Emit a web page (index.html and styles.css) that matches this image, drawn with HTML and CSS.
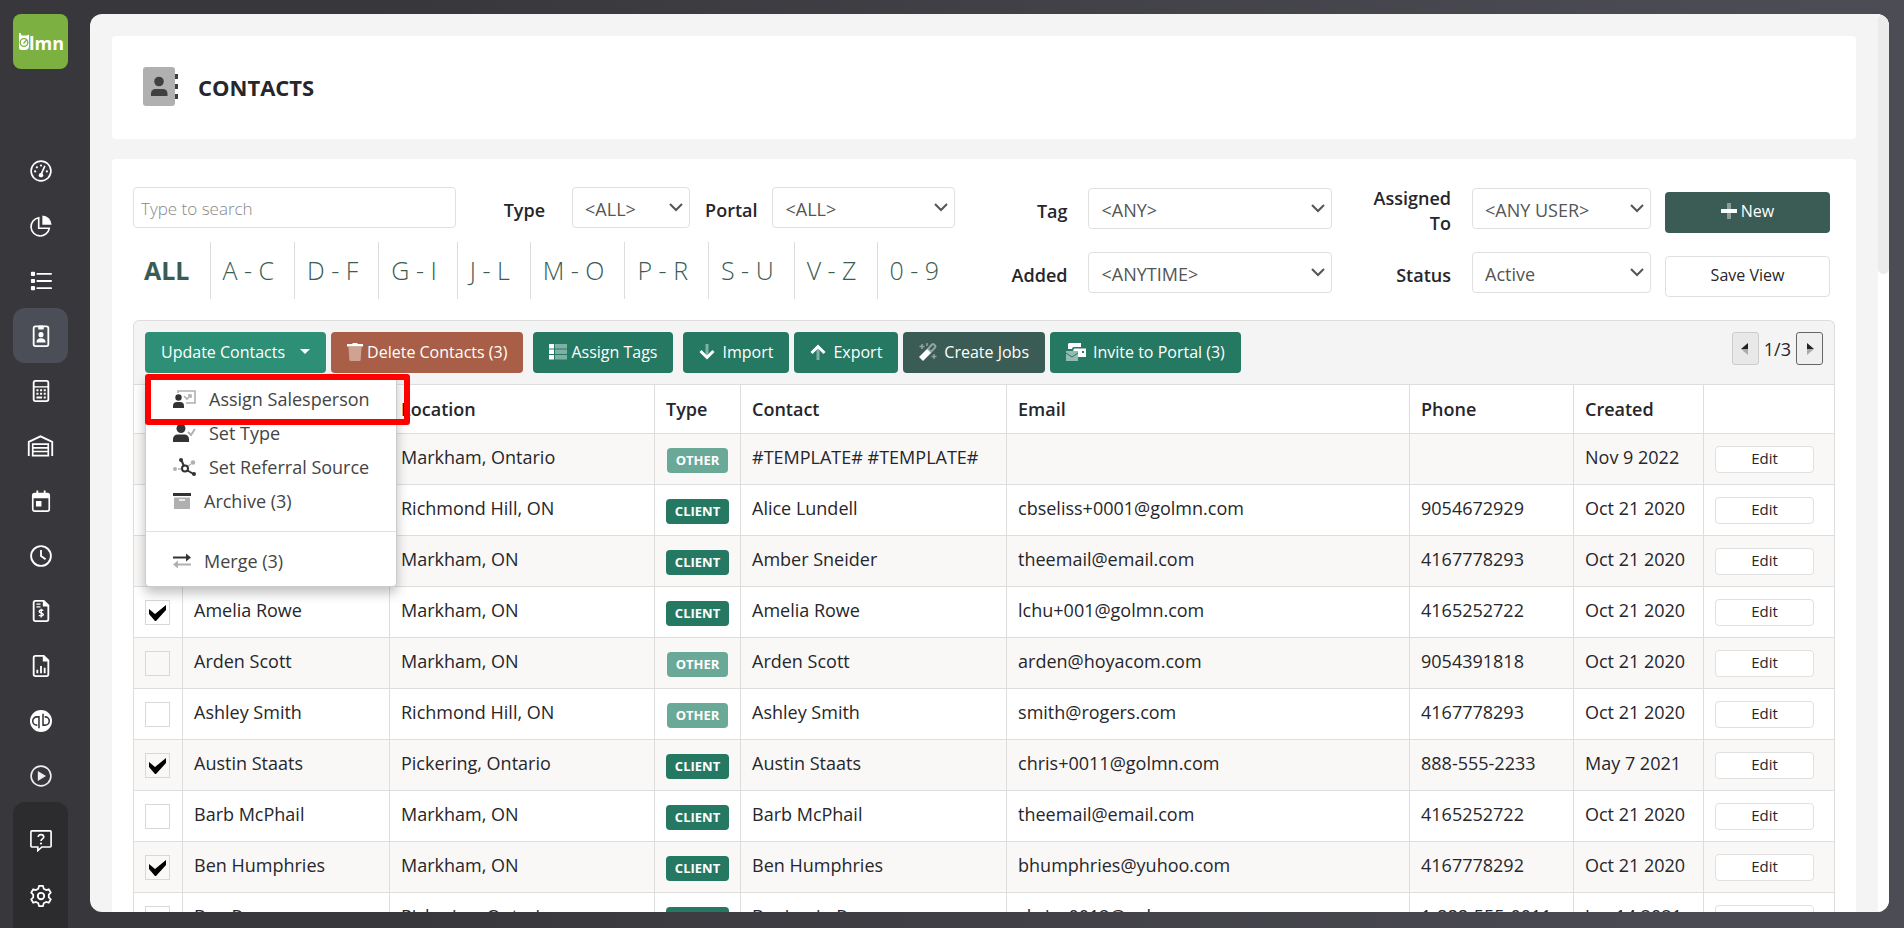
FILE: index.html
```html
<!DOCTYPE html>
<html lang="en">
<head>
    <meta charset="UTF-8">
    <meta name="viewport" content="width=device-width, initial-scale=1.0">
    <title>LMN - Contacts</title>
    <link rel="stylesheet" href="styles.css">
</head>
<body>

    <aside class="sidebar">
        <a class="logo" href="#" aria-label="LMN home">
            <svg width="55" height="55" viewBox="0 0 55 55">
                <path fill="#fff" d="M6 19h1.500l1 2.500H14l2-1V32a4 4 0 0 1-4 4H8.500A2.500 2.500 0 0 1 6 33.500z"/>
                <circle cx="11" cy="28.500" r="3.800" fill="none" stroke="#7cb041" stroke-width="1.300"/>
                <path d="M10.500 29.500l3.500-4" stroke="#7cb041" stroke-width="1.300"/>
                <text class="logo-text" x="16" y="36">lmn</text>
            </svg>
        </a>

        <nav class="side-nav" aria-label="Main">
            <a href="#" aria-label="Dashboard">
                <svg class="side-icon" viewBox="0 0 24 24"><circle cx="12" cy="12" r="10.800" fill="none" stroke="#fff" stroke-width="1.800"/><circle cx="5.600" cy="12.500" r="1.200"/><circle cx="7.500" cy="8" r="1.200"/><circle cx="12" cy="6" r="1.200"/><circle cx="18.400" cy="12.500" r="1.200"/><circle cx="12" cy="16.500" r="2.400"/><path d="M12 16l4-9" stroke="#fff" stroke-width="1.800" stroke-linecap="round"/></svg>
            </a>
            <a href="#" aria-label="Budgets">
                <svg class="side-icon" viewBox="0 0 24 24"><path d="M13.500 0.500A10.500 10.500 0 0 1 23.500 10.500h-10z"/><path d="M9.500 3A10 10 0 1 0 21 14.500H9.500z" fill="none" stroke="#fff" stroke-width="1.800"/></svg>
            </a>
            <a href="#" aria-label="Lists">
                <svg class="side-icon" viewBox="0 0 24 24"><rect x="1" y="2" width="4.500" height="4.500" rx="1"/><rect x="1" y="9.700" width="4.500" height="4.500" rx="1"/><rect x="1" y="17.500" width="4.500" height="4.500" rx="1"/><path d="M8 4.200h15M8 12h15M8 19.800h15" stroke="#fff" stroke-width="2" stroke-linecap="round"/></svg>
            </a>
            <a class="active" href="#" aria-label="Contacts">
                <svg class="side-icon" viewBox="0 0 24 24"><rect x="4" y="1.500" width="16" height="21.500" rx="2" fill="none" stroke="#fff" stroke-width="2"/><rect x="9" y="0.500" width="6" height="4.500" rx="1"/><circle cx="12" cy="10.500" r="2.800"/><path d="M7 19c0-3 2-4.500 5-4.500s5 1.500 5 4.500z"/></svg>
            </a>
            <a href="#" aria-label="Estimates">
                <svg class="side-icon" viewBox="0 0 24 24"><rect x="4" y="1" width="16" height="22" rx="2" fill="none" stroke="#fff" stroke-width="2"/><path d="M4 7.500h16" stroke="#fff" stroke-width="1.500"/><path d="M7 10h2.200v2.200H7zM11 10h2.200v2.200H11zM15 10h2.200v2.200H15zM7 14h2.200v2.200H7zM11 14h2.200v2.200H11zM15 14h2.200v2.200H15zM7 18h6.200v2.200H7zM15 18h2.200v2.200H15z"/></svg>
            </a>
            <a href="#" aria-label="Warehouse">
                <svg class="side-icon wide" viewBox="0 0 28 24"><path d="M1.200 23V7.500L14 1.500l12.800 6V23" fill="none" stroke="#fff" stroke-width="2"/><path d="M5.500 23V10h17v13M5.500 14h17M5.500 18h17M4.500 22.500h19" fill="none" stroke="#fff" stroke-width="1.800"/></svg>
            </a>
            <a href="#" aria-label="Schedule">
                <svg class="side-icon" viewBox="0 0 24 24"><rect x="3" y="4" width="18" height="19" rx="2" fill="none" stroke="#fff" stroke-width="1.800"/><path d="M3 4h18v5H3zM7 0.500h2V5H7zM15 0.500h2V5h-2zM6.500 12h6v6h-6z"/></svg>
            </a>
            <a href="#" aria-label="Timesheets">
                <svg class="side-icon" viewBox="0 0 24 24"><circle cx="12" cy="12" r="10.800" fill="none" stroke="#fff" stroke-width="2"/><path d="M12 5.500V12l5 3.500" fill="none" stroke="#fff" stroke-width="2"/></svg>
            </a>
            <a href="#" aria-label="Invoices">
                <svg class="side-icon" viewBox="0 0 24 24"><path d="M4 3a2 2 0 0 1 2-2h9l5 5v15a2 2 0 0 1-2 2H6a2 2 0 0 1-2-2z" fill="none" stroke="#fff" stroke-width="2"/><path d="M14 0.500V7h6.500z"/><path d="M7 4.500h4.500M7 7.500h4.500M14.500 11.500c-1-.8-4.500-1-4.500 1s4.500 1.300 4.500 3.300-3.500 1.900-4.800.9M12.200 9.500V19" fill="none" stroke="#fff" stroke-width="1.500"/></svg>
            </a>
            <a href="#" aria-label="Reports">
                <svg class="side-icon" viewBox="0 0 24 24"><path d="M4 3a2 2 0 0 1 2-2h9l5 5v15a2 2 0 0 1-2 2H6a2 2 0 0 1-2-2z" fill="none" stroke="#fff" stroke-width="2"/><path d="M14 0.500V7h6.500z"/><path d="M8 20v-4M12 20v-8M16 20v-6" stroke="#fff" stroke-width="2"/></svg>
            </a>
            <a href="#" aria-label="QuickBooks">
                <svg class="side-icon" viewBox="0 0 24 24"><circle cx="12" cy="12" r="12"/><path d="M9.800 20V7.500H7.500a4.500 4.500 0 0 0 0 9h.5M14.200 4v12.500h2.300a4.500 4.500 0 0 0 0-9H16" fill="none" stroke="#38373b" stroke-width="1.700"/></svg>
            </a>
            <a href="#" aria-label="Videos">
                <svg class="side-icon" viewBox="0 0 24 24"><circle cx="12" cy="12" r="10.800" fill="none" stroke="#eee" stroke-width="1.800"/><path fill="#eee" d="M8.500 6.500l9 5.500-9 5.500z"/></svg>
            </a>
        </nav>

        <nav class="side-nav side-bottom" aria-label="Help and settings">
            <a href="#" aria-label="Help">
                <svg class="side-icon" viewBox="0 0 24 24"><path d="M1 2a1 1 0 0 1 1-1h20a1 1 0 0 1 1 1v15.500a1 1 0 0 1-1 1H13l-4.500 4v-4H2a1 1 0 0 1-1-1z" fill="none" stroke="#fff" stroke-width="1.800"/><path d="M9 7.500c0-3.400 6-3.200 6 .2 0 2.100-3 2-3 4.300" fill="none" stroke="#fff" stroke-width="1.800"/><circle cx="12" cy="14.700" r="1.200"/></svg>
            </a>
            <a href="#" aria-label="Settings">
                <svg class="side-icon" viewBox="0 0 24 24"><path d="M9.800 1h4.400l.7 3 2.600 1.500 3-.9 2.200 3.800L20.500 10.500v3l2.200 2.100-2.200 3.800-3-.9-2.600 1.500-.7 3H9.800l-.7-3-2.600-1.500-3 .9-2.200-3.800L3.500 13.500v-3L1.300 8.400l2.200-3.800 3 .9L9.100 4z" fill="none" stroke="#fff" stroke-width="1.900" stroke-linejoin="round"/><circle cx="12" cy="12" r="3.500" fill="none" stroke="#fff" stroke-width="2"/></svg>
            </a>
        </nav>
    </aside>

    <main class="panel">
        <div class="page">
            <header class="card page-header">
                <svg width="36" height="40" viewBox="0 0 36 40">
                    <rect x="0" y="0" width="32" height="39" rx="3" fill="#b0b0b0"/>
                    <circle cx="16" cy="14.500" r="4.800" fill="#404040"/>
                    <path d="M8 29v-2.500a4.500 4.500 0 0 1 4.500-4.500h7.500a4.500 4.500 0 0 1 4.500 4.500V29z" fill="#404040"/>
                    <path d="M32 7h3v5h-3zM32 17h3v5h-3zM32 27h3v5h-3z" fill="#404040"/>
                </svg>
                <h1>CONTACTS</h1>
            </header>

            <section class="card contacts">
                <form class="filters">
                    <div class="filters-left">
                        <div class="search-row">
                            <input class="field search" type="text" placeholder="Type to search" aria-label="Search contacts">
                            <label for="type">Type</label>
                            <select class="field type-select" id="type"><option>&lt;ALL&gt;</option></select>
                            <label for="portal">Portal</label>
                            <select class="field portal-select" id="portal"><option>&lt;ALL&gt;</option></select>
                        </div>
                        <nav class="letters" aria-label="Filter by letter">
                            <a class="current" href="#">ALL</a>
                            <a href="#">A - C</a>
                            <a href="#">D - F</a>
                            <a href="#">G - I</a>
                            <a href="#">J - L</a>
                            <a href="#">M - O</a>
                            <a href="#">P - R</a>
                            <a href="#">S - U</a>
                            <a href="#">V - Z</a>
                            <a href="#">0 - 9</a>
                        </nav>
                    </div>

                    <div class="filters-right">
                        <label for="tag">Tag</label>
                        <select class="field" id="tag"><option>&lt;ANY&gt;</option></select>
                        <label class="narrow" for="assigned">Assigned To</label>
                        <select class="field" id="assigned"><option>&lt;ANY USER&gt;</option></select>
                        <button class="btn btn-dark" type="button">
                            <svg width="16" height="16" viewBox="0 0 16 16"><path d="M6 0h4v16H6z" fill="#8a9f99"/><path d="M0 6h16v4H0z" fill="#fff"/></svg>
                            New
                        </button>
                        <label for="added">Added</label>
                        <select class="field" id="added"><option>&lt;ANYTIME&gt;</option></select>
                        <label for="status">Status</label>
                        <select class="field" id="status"><option>Active</option></select>
                        <button class="btn btn-light" type="button">Save View</button>
                    </div>
                </form>

                <div class="toolbar">
                    <div class="dropdown">
                        <button class="btn btn-update" type="button" aria-expanded="true">Update Contacts <span class="caret"></span></button>
                        <div class="menu">
                            <a href="#">
                                <svg width="23" height="18" viewBox="0 0 23 18"><path d="M5 3V1h17v12h-9M11 6l3 3 4-4M15 5h3v3" fill="none" stroke="#b0b0b0" stroke-width="1.600"/><circle cx="5.500" cy="7.500" r="3.200" fill="#333"/><path d="M0 18v-2a4 4 0 0 1 4-4h3a4 4 0 0 1 4 4v2z" fill="#333"/></svg>
                                Assign Salesperson
                            </a>
                            <a href="#">
                                <svg width="23" height="18" viewBox="0 0 23 18"><path d="M15 8l3 3 4-6" fill="none" stroke="#b0b0b0" stroke-width="2"/><circle cx="8" cy="4.500" r="4.500" fill="#333"/><path d="M0 18v-3a4.500 4.500 0 0 1 4.500-4.500h7A4.500 4.500 0 0 1 16 15v3z" fill="#333"/></svg>
                                Set Type
                            </a>
                            <a href="#">
                                <svg width="23" height="18" viewBox="0 0 23 18"><circle cx="2" cy="11" r="2" fill="#b0b0b0"/><circle cx="20" cy="4.500" r="2.200" fill="#b0b0b0"/><path d="M5 11h3M15 8l3-2" stroke="#b0b0b0" stroke-width="1.500"/><circle cx="8" cy="2" r="2" fill="#333"/><circle cx="21" cy="16" r="2" fill="#333"/><circle cx="12" cy="10.500" r="3" fill="none" stroke="#333" stroke-width="2"/><path d="M8.500 2.500l2.500 5.500M14.500 12.500l6 3.500" stroke="#333" stroke-width="2"/></svg>
                                Set Referral Source
                            </a>
                            <a href="#">
                                <svg width="18" height="16" viewBox="0 0 18 16"><path d="M1 4.500h16V16H1z" fill="#b0b0b0"/><path d="M6 7h6" stroke="#fff" stroke-width="1.500"/><path d="M0 0h18v3H0z" fill="#333"/></svg>
                                Archive (3)
                            </a>
                            <hr>
                            <a href="#">
                                <svg width="18" height="16" viewBox="0 0 18 16"><path d="M0 4.500h14" stroke="#333" stroke-width="2"/><path d="M13 0.500l5 4-5 4z" fill="#333"/><path d="M4 11.500h14" stroke="#b0b0b0" stroke-width="2"/><path d="M5 7.500l-5 4 5 4z" fill="#b0b0b0"/></svg>
                                Merge (3)
                            </a>
                        </div>
                        <div class="highlight"></div>
                    </div>
                    <button class="btn btn-delete" type="button">
                        <svg width="16" height="18" viewBox="0 0 16 18"><path d="M1.500 4h13l-.8 12.500a1.500 1.500 0 0 1-1.500 1.500H3.800a1.500 1.500 0 0 1-1.500-1.500z" fill="#cfa394"/><path d="M0 1h5l1-1h4l1 1h5v2.500H0z" fill="#fff"/></svg>
                        Delete Contacts (3)
                    </button>
                    <button class="btn btn-green group" type="button">
                        <svg width="18" height="16" viewBox="0 0 18 16"><path d="M0 0h5v4.500H0zM0 5.500h5v4.500H0zM0 11h5v4.500H0z" fill="#fff"/><path d="M6 0h12v4.500H6zM6 5.500h12v4.500H6zM6 11h12v4.500H6z" fill="#7fb0a4"/></svg>
                        Assign Tags
                    </button>
                    <button class="btn btn-green spaced group" type="button">
                        <svg width="16" height="16" viewBox="0 0 16 16"><path d="M8 0v13" stroke="#7fb0a4" stroke-width="3"/><path d="M1.500 7L8 13.500 14.500 7" fill="none" stroke="#fff" stroke-width="3"/></svg>
                        Import
                    </button>
                    <button class="btn btn-green spaced" type="button">
                        <svg width="16" height="16" viewBox="0 0 16 16"><path d="M8 3v13" stroke="#7fb0a4" stroke-width="3"/><path d="M1.500 9L8 2.500 14.500 9" fill="none" stroke="#fff" stroke-width="3"/></svg>
                        Export
                    </button>
                    <button class="btn btn-dark spaced" type="button">
                        <svg width="18" height="18" viewBox="0 0 18 18"><path d="M9 6l4-4.500a1.500 1.500 0 0 1 2 0l1 1a1.500 1.500 0 0 1 0 2L12 9z" fill="none" stroke="#93a39f" stroke-width="2"/><path d="M3 1v5M.5 3.500h5M8 0v3M15 11v5M12.500 13.500h5" stroke="#93a39f" stroke-width="1.500"/><path d="M0 14l8-8 4 4-8 8z" fill="#fff"/></svg>
                        Create Jobs
                    </button>
                    <button class="btn btn-green spaced" type="button">
                        <svg width="20" height="18" viewBox="0 0 20 18"><path d="M3 0h12v4H8a2 2 0 0 0-2 2H2V1z" fill="#fff"/><path d="M8 5.500h12V14h-8V8H7z" fill="#fff"/><path d="M16 8h2v2h-2z" fill="#257862"/><path d="M0 8h12v10H0z" fill="#92bcb1"/><path d="M0 10l6 4 6-4" fill="none" stroke="#257862" stroke-width="1"/></svg>
                        Invite to Portal (3)
                    </button>

                    <div class="pager">
                        <button type="button" disabled aria-label="Previous page"><svg width="8" height="12" viewBox="0 0 8 12"><path d="M7 0v6H0z" fill="#222"/><path d="M7 12V6H0z" fill="#aaa"/></svg></button>
                        <span>1/3</span>
                        <button type="button" aria-label="Next page"><svg width="8" height="12" viewBox="0 0 8 12"><path d="M1 0v6h7z" fill="#222"/><path d="M1 12V6h7z" fill="#aaa"/></svg></button>
                    </div>
                </div>

                <table>
                    <colgroup>
                        <col class="col-check">
                        <col class="col-name">
                        <col class="col-location">
                        <col class="col-type">
                        <col class="col-contact">
                        <col class="col-email">
                        <col class="col-phone">
                        <col class="col-created">
                        <col class="col-actions">
                    </colgroup>
                    <thead>
                        <tr><th></th><th>Name</th><th>Location</th><th>Type</th><th>Contact</th><th>Email</th><th>Phone</th><th>Created</th><th></th></tr>
                    </thead>
                    <tbody>
                        <tr>
                            <td><input type="checkbox" aria-label="Select #TEMPLATE#"></td><td>#TEMPLATE#</td><td>Markham, Ontario</td><td><span class="badge other">OTHER</span></td>
                            <td>#TEMPLATE# #TEMPLATE#</td><td></td><td></td><td>Nov 9 2022</td><td><button class="edit" type="button">Edit</button></td>
                        </tr>
                        <tr>
                            <td><input type="checkbox" aria-label="Select Alice Lundell"></td><td>Alice Lundell</td><td>Richmond Hill, ON</td><td><span class="badge">CLIENT</span></td>
                            <td>Alice Lundell</td><td>cbseliss+0001@golmn.com</td><td>9054672929</td><td>Oct 21 2020</td><td><button class="edit" type="button">Edit</button></td>
                        </tr>
                        <tr>
                            <td><input type="checkbox" aria-label="Select Amber Sneider"></td><td>Amber Sneider</td><td>Markham, ON</td><td><span class="badge">CLIENT</span></td>
                            <td>Amber Sneider</td><td>theemail@email.com</td><td>4167778293</td><td>Oct 21 2020</td><td><button class="edit" type="button">Edit</button></td>
                        </tr>
                        <tr>
                            <td><input type="checkbox" aria-label="Select Amelia Rowe" checked></td><td>Amelia Rowe</td><td>Markham, ON</td><td><span class="badge">CLIENT</span></td>
                            <td>Amelia Rowe</td><td>lchu+001@golmn.com</td><td>4165252722</td><td>Oct 21 2020</td><td><button class="edit" type="button">Edit</button></td>
                        </tr>
                        <tr>
                            <td><input type="checkbox" aria-label="Select Arden Scott"></td><td>Arden Scott</td><td>Markham, ON</td><td><span class="badge other">OTHER</span></td>
                            <td>Arden Scott</td><td>arden@hoyacom.com</td><td>9054391818</td><td>Oct 21 2020</td><td><button class="edit" type="button">Edit</button></td>
                        </tr>
                        <tr>
                            <td><input type="checkbox" aria-label="Select Ashley Smith"></td><td>Ashley Smith</td><td>Richmond Hill, ON</td><td><span class="badge other">OTHER</span></td>
                            <td>Ashley Smith</td><td>smith@rogers.com</td><td>4167778293</td><td>Oct 21 2020</td><td><button class="edit" type="button">Edit</button></td>
                        </tr>
                        <tr>
                            <td><input type="checkbox" aria-label="Select Austin Staats" checked></td><td>Austin Staats</td><td>Pickering, Ontario</td><td><span class="badge">CLIENT</span></td>
                            <td>Austin Staats</td><td>chris+0011@golmn.com</td><td>888-555-2233</td><td>May 7 2021</td><td><button class="edit" type="button">Edit</button></td>
                        </tr>
                        <tr>
                            <td><input type="checkbox" aria-label="Select Barb McPhail"></td><td>Barb McPhail</td><td>Markham, ON</td><td><span class="badge">CLIENT</span></td>
                            <td>Barb McPhail</td><td>theemail@email.com</td><td>4165252722</td><td>Oct 21 2020</td><td><button class="edit" type="button">Edit</button></td>
                        </tr>
                        <tr>
                            <td><input type="checkbox" aria-label="Select Ben Humphries" checked></td><td>Ben Humphries</td><td>Markham, ON</td><td><span class="badge">CLIENT</span></td>
                            <td>Ben Humphries</td><td>bhumphries@yuhoo.com</td><td>4167778292</td><td>Oct 21 2020</td><td><button class="edit" type="button">Edit</button></td>
                        </tr>
                        <tr>
                            <td><input type="checkbox" aria-label="Select Ben Rowe"></td><td>Ben Rowe</td><td>Pickering, Ontario</td><td><span class="badge">CLIENT</span></td>
                            <td>Benjamin Rowe</td><td>chris+0012@golmn.com</td><td>1-888-555-0011</td><td>Jan 14 2021</td><td><button class="edit" type="button">Edit</button></td>
                        </tr>
                    </tbody>
                </table>
            </section>
        </div>
        <div class="scrollbar"><div class="thumb"></div></div>
    </main>

</body>
</html>
```
FILE: styles.css
```css
* {
    box-sizing: border-box;
}
body {
    margin: 0;
    height: 100vh;
    display: flex;
    overflow: hidden;
    font-family: "Open Sans", "Noto Sans", sans-serif;
    font-size: 18px;
    color: #26262b;
    background: linear-gradient(to right, #38373b 20%, #4c4c55 95%);
}
a {
    color: inherit;
    text-decoration: none;
}
button, input, select {
    font: inherit;
    color: inherit;
}

/* Sidebar */
.sidebar {
    flex: none;
    width: 90px;
    padding: 14px 22px 0 13px;
    display: flex;
    flex-direction: column;
}
.logo {
    height: 55px;
    border-radius: 8px;
    background: #7cb041;
}
.logo-text {
    font-size: 18px;
    font-weight: 700;
    fill: #fff;
}
.side-nav {
    margin-top: 74px;
}
.side-nav a {
    height: 55px;
    border-radius: 12px;
    display: flex;
    align-items: center;
    justify-content: center;
}
.side-nav a.active {
    background: #4b4e56;
}
.side-icon {
    width: 22px;
    height: 22px;
    fill: #fff;
}
.side-icon.wide {
    width: 27px;
}
.side-bottom {
    margin-top: -1px;
    padding: 11px 0 20px;
    flex: 1;
    border-radius: 12px 12px 0 0;
    background: #2c2c2e;
}

/* Main panel */
.panel {
    flex: 1;
    margin: 14px 15px 16px 0;
    display: flex;
    overflow: hidden;
    border-radius: 12px;
    background: #f4f4f4;
}
.page {
    flex: 1;
    min-width: 0;
    padding: 22px 22px 0;
}
.scrollbar {
    width: 11px;
    background: #fff;
}
.thumb {
    height: 29%;
    border-radius: 6px;
    background: #ebebeb;
}
.card {
    border-radius: 4px;
    background: #fff;
}
.page-header {
    display: flex;
    align-items: center;
    gap: 19px;
    height: 103px;
    padding: 0 31px 2px;
}
h1 {
    margin: 0;
    font-size: 22px;
    font-weight: 700;
}
.contacts {
    margin-top: 20px;
    padding: 28px 21px 0;
}

/* Filters */
.filters {
    display: flex;
    height: 133px;
    padding-right: 5px;
}
.filters label {
    padding-top: 5px;
    font-weight: 600;
    text-align: right;
    line-height: 25px;
}
.field {
    height: 41px;
    min-width: 0;
    border: 1px solid #e0e0e0;
    border-radius: 4px;
    padding: 3px 12px 0;
    color: #555;
    background-color: #fff;
}
select.field {
    appearance: none;
    background-image: url("data:image/svg+xml,%3Csvg xmlns='http://www.w3.org/2000/svg' width='14' height='9'%3E%3Cpath d='M1 1l6 6 6-6' fill='none' stroke='%23555' stroke-width='2'/%3E%3C/svg%3E");
    background-repeat: no-repeat;
    background-position: right 6px center;
}
.filters-left {
    flex: 822;
    min-width: 0;
}
.search-row {
    display: flex;
    align-items: center;
    gap: 15px;
}
.search-row label:first-of-type {
    width: 74px;
    margin-right: 12px;
}
.search {
    flex: 1;
    padding: 1px 7px 0;
    font-size: 17px;
    font-weight: 300;
}
.search::placeholder {
    color: #888;
}
.type-select {
    width: 118px;
}
.portal-select {
    width: 183px;
}
.letters {
    display: flex;
    margin-top: 14px;
}
.letters a {
    padding: 0 20px 0 12px;
    border-left: 1px solid #ddd;
    font-size: 25px;
    font-weight: 300;
    line-height: 57px;
    white-space: nowrap;
    color: #3a5c54;
}
.letters a.current {
    padding-left: 11px;
    border-left: none;
    font-weight: 700;
}
.filters-right {
    flex: 874;
    display: grid;
    grid-template-columns: 119px 244px 1fr 179px 165px;
    grid-template-rows: 41px 41px;
    gap: 23px 14px;
    align-items: center;
    padding-top: 1px;
}
.filters-right label {
    padding-right: 7px;
}
.filters-right .narrow {
    padding-left: 16px;
}
.filters-right .btn {
    margin-top: 7px;
}

/* Buttons */
.btn {
    height: 41px;
    padding: 0 16px 2px;
    display: inline-flex;
    align-items: center;
    justify-content: center;
    gap: 4px;
    border: none;
    border-radius: 4px;
    font-size: 16px;
    white-space: nowrap;
    color: #fff;
}
.btn-update { background: #2c8f76; }
.btn-delete { background: #a95f47; }
.btn-green { background: #257862; }
.btn-dark { background: #3a5c54; }
.btn-light {
    border: 1px solid #e0e0e0;
    background: #fff;
    color: #26262b;
}
.spaced {
    gap: 7px;
}

/* Toolbar */
.toolbar {
    display: flex;
    gap: 5px;
    height: 64px;
    padding: 11px 11px 0;
    border: 1px solid #ddd;
    border-bottom: none;
    border-radius: 6px 6px 0 0;
    background: #f4f4f4;
}
.group {
    margin-left: 5px;
}
.dropdown {
    position: relative;
}
.caret {
    margin-left: 11px;
    border: 5px solid transparent;
    border-top-color: #fff;
    border-bottom: none;
}
.menu {
    position: absolute;
    top: 43px;
    left: 0;
    z-index: 1;
    width: 252px;
    padding: 6px 0 8px;
    border: 1px solid #ccc;
    border-radius: 4px;
    background: #fff;
    box-shadow: 0 6px 12px rgba(0, 0, 0, 0.25);
    color: #444;
}
.menu a {
    height: 34px;
    padding-left: 27px;
    display: flex;
    align-items: center;
    gap: 13px;
    white-space: nowrap;
}
.menu hr {
    margin: 13px 0 12px;
    border: none;
    border-top: 1px solid #e0e0e0;
}
.highlight {
    position: absolute;
    top: 42px;
    left: 0;
    z-index: 2;
    width: 265px;
    height: 51px;
    border: 6px solid #f00;
    border-radius: 3px;
}
.pager {
    margin-left: auto;
    display: flex;
    height: 33px;
    gap: 5px;
    align-items: center;
}
.pager button {
    width: 27px;
    height: 33px;
    padding: 0;
    display: flex;
    align-items: center;
    justify-content: center;
    border: 1px solid #666;
    border-radius: 3px;
    background: #efefef;
}
.pager button:disabled {
    border-color: #ccc;
    background: #e8e8e8;
}

/* Table */
table {
    width: 100%;
    table-layout: fixed;
    border-collapse: collapse;
}
.col-check { width: 49px; }
.col-name { width: 12.17%; }
.col-location { width: 15.58%; }
.col-type { width: 86px; }
.col-contact { width: 15.64%; }
.col-phone { width: 164px; }
.col-created { width: 130px; }
.col-actions { width: 131px; }
th, td {
    height: 51px;
    padding: 0 11px 4px;
    border: 1px solid #ddd;
    text-align: left;
    white-space: nowrap;
}
th {
    height: 49px;
    padding-bottom: 1px;
    font-weight: 600;
}
tbody tr:nth-child(odd) {
    background: #f9f8f7;
}
td input {
    appearance: none;
    display: block;
    width: 25px;
    height: 25px;
    margin: 5px 0 0;
    border: 1px solid #d8d8d8;
}
td input:checked {
    background: url("data:image/svg+xml,%3Csvg xmlns='http://www.w3.org/2000/svg' width='19' height='18'%3E%3Cpath d='M1 5l6 5L18 1v5L8 17H7L1 10z'/%3E%3C/svg%3E") center no-repeat;
}
.badge {
    display: block;
    margin: 6px auto 0;
    width: 63px;
    border-radius: 4px;
    font-size: 13px;
    font-weight: 700;
    line-height: 25px;
    text-align: center;
    color: #fff;
    background: #257862;
}
.badge.other {
    width: 61px;
    background: #6aa998;
}
.edit {
    display: block;
    width: 99px;
    height: 27px;
    margin-top: 4px;
    padding: 0 0 2px;
    border: 1px solid #e0e0e0;
    border-radius: 4px;
    font-size: 15px;
    background: #fff;
}
```
